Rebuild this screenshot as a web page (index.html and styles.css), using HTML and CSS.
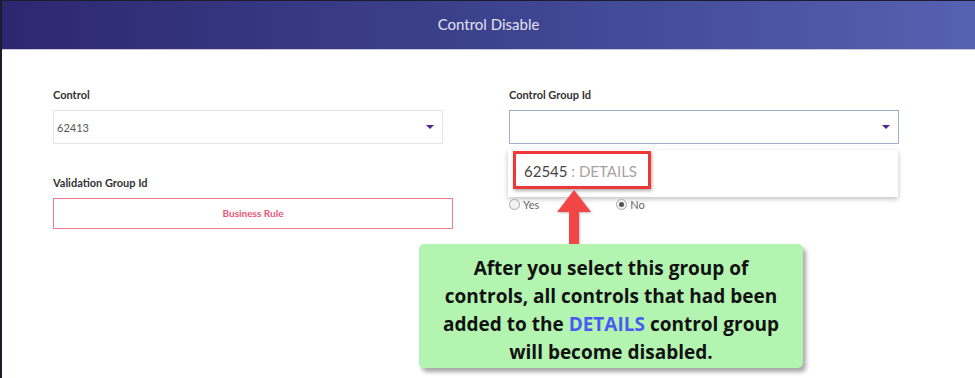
FILE: index.html
```
<!DOCTYPE html>
<html lang="en">
<head>
    <meta charset="UTF-8">
    <meta name="viewport" content="width=device-width, initial-scale=1.0">
    <title>Control Disable</title>
    <link rel="stylesheet" href="styles.css">
</head>
<body>
    <div class="frame">
        <div class="header">Control Disable</div>

        <!-- Formulário -->
        <div class="form">
            <div class="col">
                <div class="field">
                    <label>Control</label>
                    <div class="select">
                        <span>62413</span>
                        <span class="caret"></span>
                    </div>
                </div>
                <div class="field">
                    <label>Validation Group Id</label>
                    <div class="rule">Business Rule</div>
                </div>
            </div>

            <div class="col">
                <div class="field group">
                    <label>Control Group Id</label>
                    <div class="select focus">
                        <span></span>
                        <span class="caret"></span>
                    </div>
                    <!-- lista aberta -->
                    <div class="menu">
                        <div class="option"><span class="num">62545</span><span class="name"> : DETAILS</span></div>
                    </div>
                </div>
                <div class="field">
                    <label class="hidden">Disabled</label>
                    <div class="radios">
                        <span class="radio"><span class="dot"></span>Yes</span>
                        <span class="radio"><span class="dot on"></span>No</span>
                    </div>
                </div>
            </div>
        </div>

        <!-- Seta e balão explicativo -->
        <svg class="arrow" width="40" height="58" viewBox="0 0 40 58">
            <polygon points="20,2 37,24 25,24 25,56 15,56 15,24 3,24" fill="#f24646"/>
        </svg>
        <div class="note">
            After you select this group of<br>
            controls, all controls that had been<br>
            added to the <span class="blue">DETAILS</span> control group<br>
            will become disabled.
        </div>
    </div>
</body>
</html>
```

FILE: styles.css
```
/* Layout principal */
body {
    margin: 0;
    font-family: Lato, "Open Sans", sans-serif;
    background-color: white;
}
.frame {
    position: relative;
    height: 378px;
    box-sizing: border-box;
    border-left: 2px solid #1d1c2e;
    border-top: 1px solid #1d1c2e;
    overflow: hidden;
}
.header {
    height: 48px;
    line-height: 46px;
    text-align: center;
    color: #e2e2f2;
    font-size: 15px;
    background: linear-gradient(to right, #2c2870, #3f4591 55%, #5561b1);
    border-bottom: 1px solid #c9c9d6;
}

/* Formulário */
.form {
    display: grid;
    grid-template-columns: 400px 390px;
    column-gap: 56px;
    padding: 38px 0 0 51px;
}
.field {
    margin-bottom: 32px;
}
.group {
    position: relative;
}
label {
    display: block;
    font-size: 11px;
    line-height: 14px;
    font-weight: bold;
    color: #333;
    margin-bottom: 8px;
}
label.hidden {
    visibility: hidden;
}
.select {
    width: 390px;
    height: 34px;
    box-sizing: border-box;
    border: 1px solid #e6e6ee;
    display: flex;
    align-items: center;
    justify-content: space-between;
    padding: 0 8px 0 3px;
    font-size: 11px;
    color: #555;
}
.select.focus {
    border: 1.5px solid #9fafc6;
}
.caret {
    width: 0;
    height: 0;
    border-left: 4px solid transparent;
    border-right: 4px solid transparent;
    border-top: 4px solid #4a2690;
}
.rule {
    height: 31px;
    box-sizing: border-box;
    border: 1.5px solid #f27a8e;
    text-align: center;
    line-height: 28px;
    font-size: 10px;
    font-weight: bold;
    color: #ec5577;
}

/* Lista aberta */
.menu {
    position: absolute;
    top: 62px;
    left: -1px;
    width: 390px;
    height: 47px;
    background-color: white;
    box-shadow: 0 2px 5px rgba(0, 0, 0, 0.25);
}
.option {
    margin: 1px 0 0 5px;
    width: 138px;
    height: 38px;
    box-sizing: border-box;
    border: 3px solid #ee3838;
    box-shadow: 1px 2px 3px rgba(0, 0, 0, 0.3);
    padding-left: 8px;
    line-height: 34px;
    font-size: 15px;
}
.num {
    color: #444;
}
.name {
    color: #a4a4a4;
}

/* Opções sim / não */
.radios {
    display: flex;
    gap: 77px;
    margin-top: 8px;
    font-size: 11px;
    color: #666;
}
.radio {
    display: flex;
    align-items: center;
    gap: 3px;
}
.dot {
    width: 9px;
    height: 9px;
    border: 1px solid #aaa;
    border-radius: 50%;
    background-color: #f2f2f2;
    position: relative;
}
.dot.on::after {
    content: "";
    position: absolute;
    left: 2px;
    top: 2px;
    width: 5px;
    height: 5px;
    border-radius: 50%;
    background-color: #555;
}

/* Seta e balão */
.arrow {
    position: absolute;
    left: 552px;
    top: 187px;
    filter: drop-shadow(1px 1px 1px rgba(0, 0, 0, 0.25));
}
.note {
    position: absolute;
    left: 417px;
    top: 243px;
    width: 384px;
    height: 124px;
    box-sizing: border-box;
    padding-top: 10px;
    background-color: #b3f5b0;
    border-radius: 5px;
    box-shadow: 3px 4px 4px rgba(0, 0, 0, 0.35);
    text-align: center;
    font-family: "Open Sans", sans-serif;
    font-weight: bold;
    font-size: 19px;
    line-height: 28px;
    color: #111;
}
.blue {
    color: #4a5bf5;
}
```
